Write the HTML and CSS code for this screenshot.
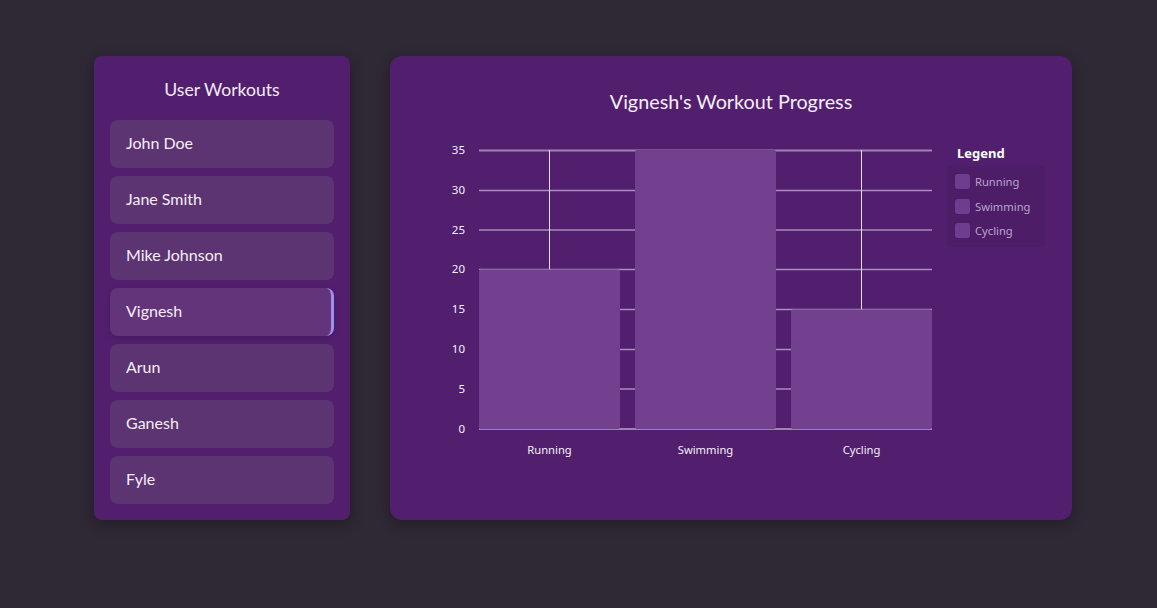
FILE: index.html
```html
<!DOCTYPE html>
<html>
<head>
<meta charset="utf-8">
<link rel="stylesheet" href="styles.css">
</head>
<body>
<div class="layout">
  <aside class="sidebar">
    <h2 class="sidebar-title">User Workouts</h2>
    <ul class="user-list">
      <li class="user-item">John Doe</li>
      <li class="user-item">Jane Smith</li>
      <li class="user-item">Mike Johnson</li>
      <li class="user-item active">Vignesh</li>
      <li class="user-item">Arun</li>
      <li class="user-item">Ganesh</li>
      <li class="user-item">Fyle</li>
    </ul>
  </aside>
  <main class="panel">
    <h2 class="panel-title">Vignesh's Workout Progress</h2>
    <div class="chart-row">
      <svg class="chart" width="500" height="320" viewBox="0 0 500 320">
        <g class="grid">
          <line x1="39" x2="492" y1="10.5" y2="10.5" class="top"/>
          <line x1="39" x2="492" y1="50.5" y2="50.5"/>
          <line x1="39" x2="492" y1="90" y2="90"/>
          <line x1="39" x2="492" y1="129.5" y2="129.5"/>
          <line x1="39" x2="492" y1="169.5" y2="169.5"/>
          <line x1="39" x2="492" y1="209.5" y2="209.5"/>
          <line x1="39" x2="492" y1="249" y2="249"/>
          <line x1="39" x2="492" y1="289" y2="289" class="top"/>
        </g>
        <g class="vgrid">
          <line x1="109.5" x2="109.5" y1="10" y2="289"/>
          <line x1="265.5" x2="265.5" y1="10" y2="289"/>
          <line x1="421.5" x2="421.5" y1="10" y2="289"/>
        </g>
        <g class="bars">
          <rect x="39" y="129.6" width="141" height="159.4" rx="2"/>
          <rect x="195" y="10" width="141" height="279" rx="2"/>
          <rect x="351" y="169.4" width="141" height="119.6" rx="2"/>
        </g>
        <g class="ylabels">
          <text x="25" y="14">35</text>
          <text x="25" y="54">30</text>
          <text x="25" y="94">25</text>
          <text x="25" y="133">20</text>
          <text x="25" y="173">15</text>
          <text x="25" y="213">10</text>
          <text x="25" y="253">5</text>
          <text x="25" y="293">0</text>
        </g>
        <g class="xlabels">
          <text x="109.5" y="314">Running</text>
          <text x="265.5" y="314">Swimming</text>
          <text x="421.5" y="314">Cycling</text>
        </g>
      </svg>
      <div class="legend">
        <div class="legend-title">Legend</div>
        <ul class="legend-box">
          <li class="legend-item"><span class="swatch"></span>Running</li>
          <li class="legend-item"><span class="swatch"></span>Swimming</li>
          <li class="legend-item"><span class="swatch"></span>Cycling</li>
        </ul>
      </div>
    </div>
  </main>
</div>
</body>
</html>
```
FILE: styles.css
```css
* { box-sizing: border-box; }
html, body { margin: 0; padding: 0; }
body {
  background: #2f2835;
  width: 1157px;
  height: 608px;
  overflow: hidden;
  font-family: Lato, "Open Sans", sans-serif;
}
.layout {
  display: flex;
  gap: 40px;
  margin: 56px 0 0 94px;
  align-items: flex-start;
}
.sidebar {
  width: 256px;
  height: 464px;
  background: #521f6e;
  border-radius: 8px;
  padding: 22px 16px 16px;
  box-shadow: 0 4px 14px rgba(0,0,0,0.28);
}
.sidebar-title {
  margin: 0 0 18px;
  font-size: 17.6px;
  line-height: 24px;
  font-weight: 400;
  color: #f3ecf7;
  text-align: center;
}
.user-list {
  list-style: none;
  margin: 0;
  padding: 0;
  display: flex;
  flex-direction: column;
  gap: 8px;
}
.user-item {
  height: 48px;
  display: flex;
  align-items: center;
  padding: 0 0 3px 16px;
  background: #5c3471;
  border-radius: 8px;
  color: #f5eef8;
  font-size: 16px;
}
.user-item.active {
  background: #633479;
  border-right: 3px solid #9f8ef2;
  box-shadow: 0 2px 6px rgba(0,0,0,0.15);
}
.panel {
  width: 682px;
  height: 464px;
  background: #521f6e;
  border-radius: 12px;
  padding-top: 32px;
  box-shadow: 0 4px 14px rgba(0,0,0,0.28);
}
.panel-title {
  margin: 0;
  font-size: 19.8px;
  line-height: 26px;
  font-weight: 400;
  color: #f6eef9;
  text-align: center;
}
.chart-row {
  display: flex;
  margin-top: 26px;
  padding-left: 50px;
}
.chart { display: block; }
.grid line { stroke: #a78dbd; stroke-width: 1.5; }
.grid line.top { stroke: #9c86b0; stroke-width: 2; }
.vgrid line { stroke: #e6dcee; stroke-width: 1; }
.bars rect { fill: #733f8f; }
.ylabels text {
  font-family: "Noto Sans", "Open Sans", sans-serif;
  font-size: 11.5px;
  fill: #f6f0fa;
  text-anchor: end;
}
.xlabels text {
  font-family: "Noto Sans", "Open Sans", sans-serif;
  font-size: 11.2px;
  fill: #f6f0fa;
  text-anchor: middle;
}
.legend {
  margin-left: 7px;
  padding-top: 5px;
  width: 98px;
}
.legend-title {
  font-family: "Noto Sans", "Open Sans", sans-serif;
  font-weight: 700;
  font-size: 13px;
  line-height: 16px;
  color: #ffffff;
  padding-left: 10px;
}
.legend-box {
  list-style: none;
  margin: 5px 0 0;
  padding: 8px;
  background: #4d1d67;
  display: flex;
  flex-direction: column;
  gap: 9.5px;
  height: 81px;
}
.legend-item {
  display: flex;
  align-items: center;
  gap: 5px;
  height: 15px;
  font-family: "Noto Sans", "Open Sans", sans-serif;
  font-size: 11.2px;
  color: #b9a5d0;
}
.swatch {
  width: 15px;
  height: 15px;
  border-radius: 3px;
  background: #6f3d8d;
  flex: none;
}
```
